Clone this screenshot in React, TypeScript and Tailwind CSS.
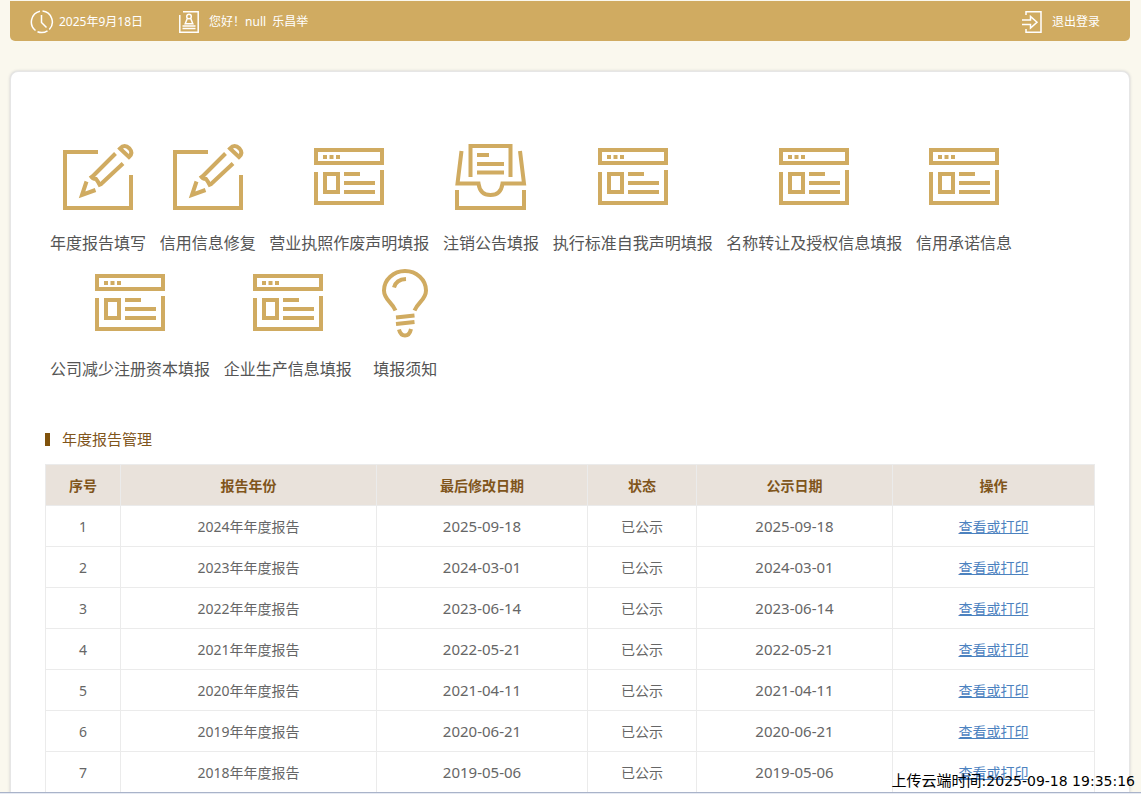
import type { ReactNode } from "react";

type IconName = "edit" | "window" | "inbox" | "bulb";

interface MenuItem {
  label: string;
  icon: IconName;
}

interface Report {
  year: number;
  modified: string;
  published: string;
}

const menuItems: MenuItem[] = [
  { label: "年度报告填写", icon: "edit" },
  { label: "信用信息修复", icon: "edit" },
  { label: "营业执照作废声明填报", icon: "window" },
  { label: "注销公告填报", icon: "inbox" },
  { label: "执行标准自我声明填报", icon: "window" },
  { label: "名称转让及授权信息填报", icon: "window" },
  { label: "信用承诺信息", icon: "window" },
  { label: "公司减少注册资本填报", icon: "window" },
  { label: "企业生产信息填报", icon: "window" },
  { label: "填报须知", icon: "bulb" },
];

const reports: Report[] = [
  { year: 2024, modified: "2025-09-18", published: "2025-09-18" },
  { year: 2023, modified: "2024-03-01", published: "2024-03-01" },
  { year: 2022, modified: "2023-06-14", published: "2023-06-14" },
  { year: 2021, modified: "2022-05-21", published: "2022-05-21" },
  { year: 2020, modified: "2021-04-11", published: "2021-04-11" },
  { year: 2019, modified: "2020-06-21", published: "2020-06-21" },
  { year: 2018, modified: "2019-05-06", published: "2019-05-06" },
];

const columns = [
  { title: "序号", width: "w-[75px]" },
  { title: "报告年份", width: "w-[256px]" },
  { title: "最后修改日期", width: "w-[211px]" },
  { title: "状态", width: "w-[109px]" },
  { title: "公示日期", width: "w-[196px]" },
  { title: "操作", width: "w-[202px]" },
];

const cellClass = "border border-[#ebebeb] pt-px";

const iconPaths: Record<IconName, ReactNode> = {
  edit: (
    <>
      <path d="M40 15H7v56h66V38" />
      <path d="M57.5 16.5 33.5 40.5M65 26.5 42.5 47.5" />
      <path d="M32.5 38.5q2 3.5 5.5 3.5q2.5 3 4.5 7.5" />
      <path d="M28.5 44.5 24 58 37.5 53" />
      <path d="M62 11.5 71 20Q75.5 16 71.5 11.5Q66.5 6.5 62 11.5Z" />
    </>
  ),
  window: (
    <>
      <path d="M7 13h66v13H7zM7 35v31h66V33" />
      <path d="M16 37h13v18H16z" />
      <path d="M35 37h16M35 46h31M35 55h31" />
      <path d="M14 20h4M20.5 20h4M27 20h4" />
    </>
  ),
  inbox: (
    <>
      <path d="M19.5 40V9h40v31" />
      <path d="M26 18h12M26 27h27M26 35.5h27" />
      <path d="M10.5 14 6.5 46.5H27.5Q29 58 39.5 58Q50 58 51.5 46.5H73L69 14" />
      <path d="M6 53v18h67V53" />
    </>
  ),
  bulb: (
    <>
      <path d="M30.5 47.5C26.5 38.5 19 36.5 19 27.5A21 19.5 0 0 1 61 27.5C61 36.5 53.5 38.5 49.5 47.5" />
      <path d="M29 24.5Q31 16.5 41 16" />
      <path d="M31 54.5 49.5 52.5M31 61 49.5 59" />
      <path d="M34 66.5Q35.5 72.5 40 72.5Q44.5 72.5 46 66" />
    </>
  ),
};

function MenuIcon({ name }: { name: IconName }) {
  return (
    <svg
      viewBox="0 0 80 80"
      className="mx-auto size-20"
      fill="none"
      stroke="#d0ab61"
      strokeWidth="4"
      aria-hidden="true"
    >
      {iconPaths[name]}
    </svg>
  );
}

function TopBar() {
  return (
    <header className="mt-px flex h-10 items-center rounded-b-[5px] bg-[#d0ab61] px-5 pt-px text-xs text-white">
      <svg viewBox="0 0 24 24" className="size-6" fill="none" stroke="currentColor" strokeWidth="1.5" aria-hidden="true">
        <path d="M10 1.2A11 11 0 0 0 5.5 20.5M7.5 21.7A11 11 0 0 0 17.5 20.8M19.3 19.5A11 11 0 0 0 12.5 1" />
        <path d="M11.5 5v7.5l5 5" />
      </svg>
      <span className="ml-[5px]">2025年9月18日</span>

      <svg viewBox="0 0 20 22" className="ml-9 h-[22px] w-5" fill="none" stroke="currentColor" strokeWidth="1.5" aria-hidden="true">
        <path d="M.8 4v17.2h18.4V.8H4" />
        <circle cx="10" cy="5.5" r="2.3" />
        <path d="M8.3 7.5 6.2 12.7h7.6L11.7 7.5M3.5 15h13M3.5 17.5h13" />
      </svg>
      <span className="ml-[10px]">您好！null&nbsp; 乐昌举</span>

      <a href="#" className="ml-auto mr-[10px] flex items-center gap-[10px]">
        <svg viewBox="0 0 20 22" className="h-[22px] w-5" fill="none" stroke="currentColor" strokeWidth="1.5" aria-hidden="true">
          <path d="M4 4V.8h15v20.4H4V18" />
          <path d="M0 9h8.5V5.5L15 11.2 8.5 17v-3.5H0" />
        </svg>
        退出登录
      </a>
    </header>
  );
}

function ReportTable() {
  return (
    <table className="w-full table-fixed border-collapse text-center text-sm text-[#666]">
      <thead>
        <tr className="h-[41px] bg-[#e9e2db] text-[#80551b]">
          {columns.map((column) => (
            <th key={column.title} className={`${cellClass} font-bold ${column.width}`}>
              {column.title}
            </th>
          ))}
        </tr>
      </thead>
      <tbody>
        {reports.map((report, index) => (
          <tr key={report.year} className="h-[41px]">
            <td className={cellClass}>{index + 1}</td>
            <td className={cellClass}>{report.year}年年度报告</td>
            <td className={`${cellClass} text-[15px]`}>{report.modified}</td>
            <td className={cellClass}>已公示</td>
            <td className={`${cellClass} text-[15px]`}>{report.published}</td>
            <td className={cellClass}>
              <a href="#" className="text-[#4c82bf] underline">
                查看或打印
              </a>
            </td>
          </tr>
        ))}
      </tbody>
    </table>
  );
}

export default function App() {
  return (
    <div className="relative flex min-h-screen flex-col overflow-hidden bg-[#faf8ee] pr-[11px] pl-[10px] font-['Noto_Sans','Noto_Sans_CJK_SC',sans-serif]">
      <TopBar />

      <main className="mt-[30px] grow rounded-t-lg border border-b-0 border-[#e6e6e6] bg-white px-[34px] pt-[65px] shadow-[0_0_3px_#ccc]">
        <nav className="text-sm">
          {menuItems.map((item) => (
            <span key={item.label}>
              <a href="#" className="mb-2 inline-block px-[5px] text-center align-top text-base text-[#555]">
                <MenuIcon name={item.icon} />
                <span className="mt-[14px] block">{item.label}</span>
              </a>{" "}
            </span>
          ))}
        </nav>

        <h2 className="mt-[38px] mb-[13px] flex items-center gap-3 text-[15px] leading-6 text-[#80551b]">
          <span className="h-[13px] w-[5px] bg-[#80520c]" />
          年度报告管理
        </h2>

        <ReportTable />
      </main>

      {/* upload stamp sits over the last table row */}
      <p className="absolute right-[6px] bottom-[3px] text-[15px] leading-5 text-black">
        上传云端时间
        <span className="font-['DejaVu_Sans',sans-serif] text-sm">:2025-09-18 19:35:16</span>
      </p>
      <div className="absolute inset-x-0 bottom-0 h-[2px] border-t border-[#a9b3c9] bg-[#e6eaf3]" />
    </div>
  );
}
